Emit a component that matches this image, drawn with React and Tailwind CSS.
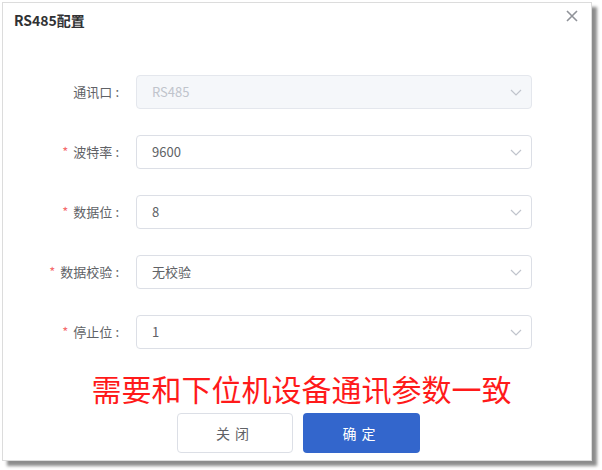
import React from "react";

const font = { fontFamily: '"Noto Sans CJK SC", "Noto Sans", sans-serif' };

const rows = [
  { label: "通讯口", value: "RS485", required: false, disabled: true },
  { label: "波特率", value: "9600", required: true },
  { label: "数据位", value: "8", required: true },
  { label: "数据校验", value: "无校验", required: true },
  { label: "停止位", value: "1", required: true },
];

function Chevron() {
  return (
    <svg width="12" height="7" viewBox="0 0 12 7" fill="none">
      <path d="M1 1l5 5 5-5" stroke="#c0c4cc" strokeWidth="1.2" />
    </svg>
  );
}

function SelectRow({ label, value, required, disabled }) {
  return (
    <div className="flex items-center h-[34px]">
      <div className="w-[116px] flex justify-end items-center text-[13px] text-[#606266]">
        {required && <span className="text-[#f56c6c] mr-[5px]">*</span>}
        {label}
        <span className="ml-[3px]">:</span>
      </div>
      <div
        className={
          "ml-[17px] w-[396px] h-[34px] rounded-[4px] border flex items-center justify-between pl-[15px] pr-[9px] " +
          (disabled
            ? "bg-[#f5f7fa] border-[#e4e7ed] text-[#c0c4cc]"
            : "bg-white border-[#dcdfe6] text-[#606266]")
        }
      >
        <span className="text-[13px]">{value}</span>
        <Chevron />
      </div>
    </div>
  );
}

export default function App() {
  return (
    <div className="min-h-screen bg-white pl-[2px] pt-[2px]" style={font}>
      <div className="w-[590px] h-[459px] bg-white border border-[#dcdcdc] shadow-[5px_5px_3px_rgba(0,0,0,0.45)] flex flex-col">
        {/* Header */}
        <div className="h-[35px] flex items-center justify-between pl-[11px] pr-[13px]">
          <span className="text-[14px] font-bold text-[#303133]">RS485配置</span>
          <svg width="12" height="12" viewBox="0 0 12 12" className="-mt-[9px]">
            <path d="M1 1l10 10M11 1L1 11" stroke="#909399" strokeWidth="1.6" />
          </svg>
        </div>

        {/* Form */}
        <div className="mt-[37px] flex flex-col gap-[26px]">
          {rows.map((r) => (
            <SelectRow key={r.label} {...r} />
          ))}
        </div>

        {/* Note */}
        <div className="mt-[22px] h-[34px] flex items-center justify-center pl-[9px] text-[30px] leading-none text-[#ff1a1a]">
          需要和下位机设备通讯参数一致
        </div>

        {/* Buttons */}
        <div className="mt-[8px] flex gap-[10px] pl-[174px]">
          <button className="w-[116px] h-[40px] rounded-[4px] border border-[#dcdfe6] bg-white text-[14px] text-[#606266] tracking-[5px]">
            关闭
          </button>
          <button className="w-[117px] h-[40px] rounded-[4px] bg-[#3366cc] text-[14px] text-white tracking-[5px]">
            确定
          </button>
        </div>
      </div>
    </div>
  );
}
